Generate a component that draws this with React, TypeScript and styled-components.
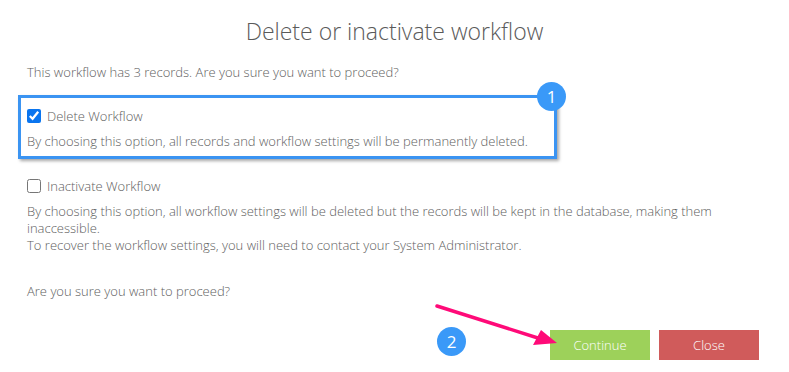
import styled, {createGlobalStyle} from "styled-components";


const GlobalStyle = createGlobalStyle`
  html, body {
    margin: 0;
    padding: 0;
    background: #fff;
  }
  body {
    font-family: "Open Sans", "Liberation Sans", sans-serif;
    font-weight: 300;
    color: #5e5e5e;
  }
`;

function App() {
  return (
    <>
      <GlobalStyle/>
      <Dialog>
        <Title>Delete or inactivate workflow</Title>
        <Text>This workflow has 3 records. Are you sure you want to proceed?</Text>

        <Highlight>
          <CheckRow>
            <input type='checkbox' defaultChecked/>
            <span>Delete Workflow</span>
          </CheckRow>
          <Description>By choosing this option, all records and workflow settings will be permanently deleted.</Description>
          <Badge $top={-16} $right={-12}>1</Badge>
        </Highlight>

        <Option>
          <CheckRow>
            <input type='checkbox'/>
            <span>Inactivate Workflow</span>
          </CheckRow>
          <Description>
            By choosing this option, all workflow settings will be deleted but the records will be kept in the database, making them inaccessible.
            <br/>
            To recover the workflow settings, you will need to contact your System Administrator.
          </Description>
        </Option>

        <Question>Are you sure you want to proceed?</Question>

        <Footer>
          <Badge $top={-3} $left={410}>2</Badge>
          <Arrow width='130' height='50' viewBox='0 0 130 50'>
            <line x1='4' y1='5' x2='108' y2='38' stroke='#ff0a78' strokeWidth='3.5' strokeLinecap='round'/>
            <polygon points='124,42 100,44 108,29' fill='#ff0a78'/>
          </Arrow>
          <Button $color='#9dd15a'>Continue</Button>
          <Button $color='#d05b5b'>Close</Button>
        </Footer>
      </Dialog>
    </>
  );
}


const Dialog = styled.div`
  width: 789px;
  height: 372px;
  box-sizing: border-box;
  padding: 16px 30px 0 27px;
  font-size: 13px;
`

const Title = styled.h2`
  margin: 0;
  text-align: center;
  font-size: 23px;
  line-height: 30px;
  font-weight: 300;
  color: #5a5a5a;
  padding-left: 3px;
`

const Text = styled.p`
  margin: 18px 0 0;
  line-height: 17px;
`

const Highlight = styled.div`
  position: relative;
  margin: 14px 0 0 -9px;
  width: 527px;
  padding: 8px 0 6px 6px;
  border: 3px solid #3b94f2;
  box-shadow: 2px 2px 3px rgba(0, 0, 0, 0.35);
`

const Option = styled.div`
  margin-top: 17px;
`

const CheckRow = styled.label`
  display: flex;
  align-items: center;
  gap: 6px;
  height: 20px;
  line-height: 20px;

  input {
    margin: 0 0 0 0;
    width: 14px;
    height: 14px;
    accent-color: #0a75ef;
  }
`

const Description = styled.p`
  margin: 7px 0 0;
  line-height: 17px;
`

const Question = styled.p`
  margin: 29px 0 0;
  line-height: 17px;
`

const Footer = styled.div`
  position: relative;
  display: flex;
  justify-content: flex-end;
  gap: 9px;
  margin-top: 30px;
`

const Badge = styled.span<{ $top: number; $left?: number; $right?: number }>`
  position: absolute;
  top: ${p => p.$top}px;
  ${p => p.$left !== undefined ? `left: ${p.$left}px;` : ''}
  ${p => p.$right !== undefined ? `right: ${p.$right}px;` : ''}
  width: 29px;
  height: 29px;
  border-radius: 50%;
  background: #3a99f8;
  color: #fff;
  font-size: 17px;
  line-height: 29px;
  text-align: center;
  font-weight: 400;
`

const Arrow = styled.svg`
  position: absolute;
  left: 406px;
  top: -29px;
  z-index: 1;
`

const Button = styled.button<{ $color: string }>`
  width: 100px;
  height: 30px;
  border: none;
  background: ${p => p.$color};
  color: #fff;
  font-family: inherit;
  font-weight: 300;
  font-size: 13px;
  padding: 0;
`

export default App;
